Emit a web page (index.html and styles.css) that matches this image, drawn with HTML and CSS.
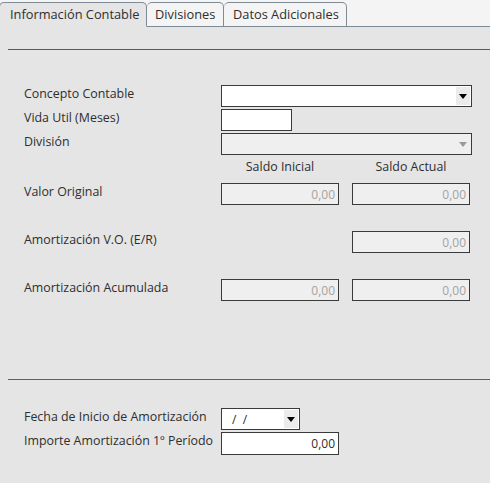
FILE: index.html
```html
<!DOCTYPE html>
<html lang="es">
<head>
<meta charset="utf-8">
<title>Información Contable</title>
<link rel="stylesheet" href="styles.css">
</head>
<body>
<div class="tabs">
  <div class="tab tab-active">Información Contable</div>
  <div class="tab">Divisiones</div>
  <div class="tab">Datos Adicionales</div>
  <div class="tab-fill"></div>
</div>
<div class="panel">
  <div class="rule rule-top"></div>
  <div class="form">
    <div class="row">
      <label class="label">Concepto Contable</label>
      <div class="box box-wide">
        <span class="box-text"></span>
        <span class="drop"><span class="tri"></span></span>
      </div>
    </div>
    <div class="row">
      <label class="label">Vida Util (Meses)</label>
      <div class="box box-small"></div>
    </div>
    <div class="row">
      <label class="label">División</label>
      <div class="box box-wide box-disabled">
        <span class="box-text"></span>
        <span class="drop drop-plain"><span class="tri tri-gray"></span></span>
      </div>
    </div>
    <div class="row row-head">
      <span class="label"></span>
      <span class="head">Saldo Inicial</span>
      <span class="head">Saldo Actual</span>
    </div>
    <div class="row row-valor">
      <label class="label">Valor Original</label>
      <div class="box box-num box-disabled">0,00</div>
      <div class="box box-num box-disabled">0,00</div>
    </div>
    <div class="row row-spaced">
      <label class="label">Amortización V.O. (E/R)</label>
      <div class="box-empty"></div>
      <div class="box box-num box-disabled">0,00</div>
    </div>
    <div class="row row-spaced">
      <label class="label">Amortización Acumulada</label>
      <div class="box box-num box-disabled">0,00</div>
      <div class="box box-num box-disabled">0,00</div>
    </div>
  </div>
  <div class="rule rule-bottom"></div>
  <div class="form form-bottom">
    <div class="row">
      <label class="label">Fecha de Inicio de Amortización</label>
      <div class="box box-date">
        <span class="box-text date-text">/&nbsp;&nbsp;/</span>
        <span class="drop"><span class="tri"></span></span>
      </div>
    </div>
    <div class="row row-importe">
      <label class="label">Importe Amortización 1º Período</label>
      <div class="box box-num box-importe">0,00</div>
    </div>
  </div>
</div>
</body>
</html>
```
FILE: styles.css
```css
* { box-sizing: border-box; }
html, body {
  margin: 0;
  padding: 0;
  background: #e5e5e5;
}
body {
  font-family: "Open Sans", "DejaVu Sans", sans-serif;
  font-size: 12.4px;
  color: #2e2e2e;
  width: 490px;
  height: 483px;
  overflow: hidden;
}

/* Tabs */
.tabs {
  display: flex;
  align-items: flex-end;
  height: 27px;
  background: #f4f4f4;
}
.tab {
  height: 25px;
  line-height: 23px;
  padding: 0 9px;
  border: 1px solid #7f8b94;
  border-left: none;
  border-radius: 5px 5px 0 0;
  background: #f4f4f4;
  color: #2e2e2e;
  white-space: nowrap;
  font-size: 12.8px;
}
.tab-active {
  background: #e5e5e5;
  border-bottom: 1px solid #e5e5e5;
  width: 148px;
  padding-left: 10px;
  margin-left: -1px;
  border-left: 1px solid #7f8b94;
}
.tab:nth-child(2) { width: 77px; padding-left: 8px; }
.tab:nth-child(3) { width: 123px; padding-left: 9px; }
.tab-fill {
  flex: 1;
  height: 1px;
  background: #7f8b94;
}

/* Panel */
.panel {
  padding-top: 22px;
}
.rule {
  height: 1px;
  margin-left: 8px;
}
.rule-top { background: #1f68ac; }
.rule-bottom { background: #0a78d2; margin-top: 78px; }

.form {
  padding-left: 24px;
  padding-top: 35px;
  display: flex;
  flex-direction: column;
  gap: 2px;
}
.form-bottom { padding-top: 28px; }

.row {
  display: flex;
  align-items: center;
  height: 22px;
}
.label {
  width: 197px;
  flex: none;
  line-height: 18px;
  align-self: flex-start;
  white-space: nowrap;
}
.head {
  width: 118px;
  text-align: center;
  margin-right: 13px;
  line-height: 20px;
  align-self: flex-start;
}
.row-valor { margin-top: 2px; }
.row-spaced { margin-top: 24px; }
.row-importe { height: 23px; }

.box {
  height: 22px;
  border: 1px solid #3a3a3a;
  background: #ffffff;
  display: flex;
  align-items: center;
  flex: none;
}
.box + .box, .box-empty + .box { margin-left: 13px; }
.box-empty { width: 118px; flex: none; }
.box-wide { width: 251px; }
.box-small { width: 71px; }
.box-disabled { background: #efefef; }
.box-num {
  width: 118px;
  justify-content: flex-end;
  padding-right: 3px;
  font-size: 12px;
  color: #a3a3a3;
}
.box-importe { height: 23px; color: #2e2e2e; }
.box-date { width: 79px; }
.box-text { flex: 1; }
.date-text { padding-left: 10px; font-size: 12px; }

.drop {
  width: 14px;
  height: 18px;
  margin-right: 1px;
  background: #ebebeb;
  display: flex;
  align-items: center;
  justify-content: center;
}
.drop-plain { background: transparent; }
.tri {
  width: 0;
  height: 0;
  border-left: 4px solid transparent;
  border-right: 4px solid transparent;
  border-top: 5px solid #000000;
}
.tri-gray { border-top-color: #9a9a9a; }
```
